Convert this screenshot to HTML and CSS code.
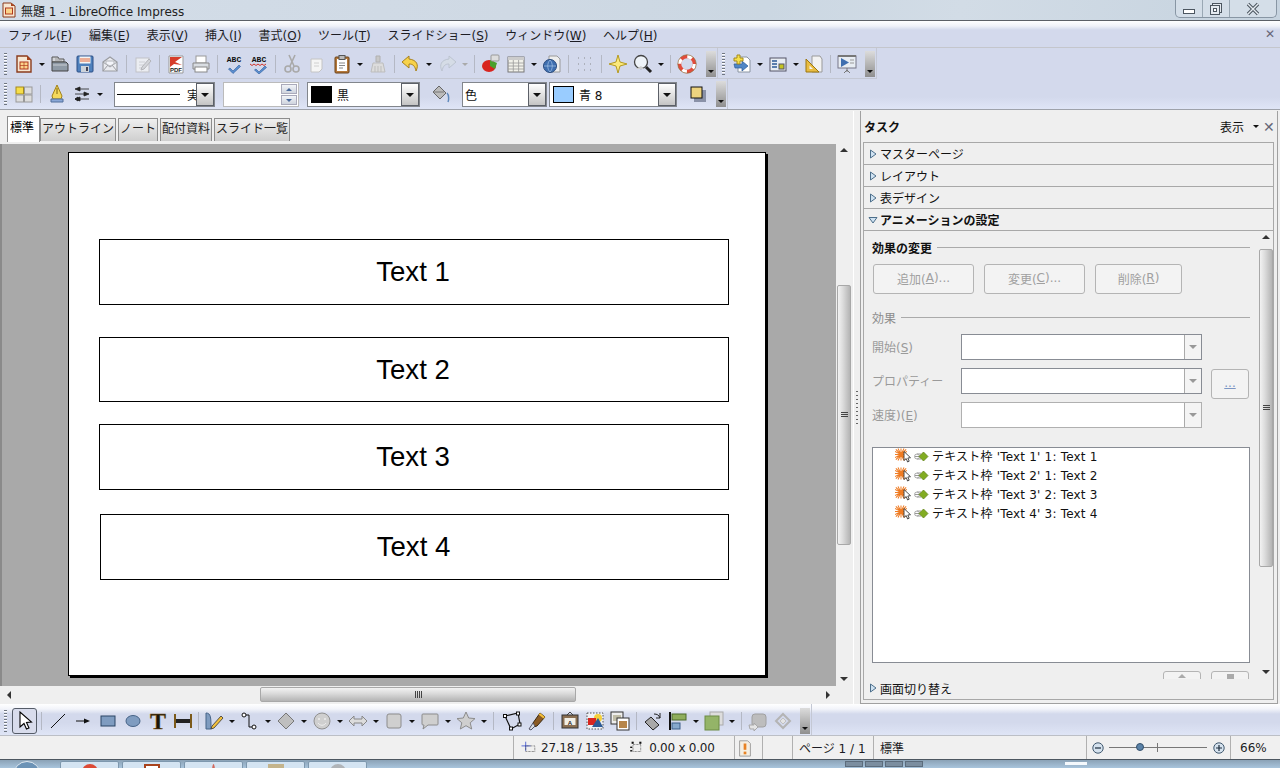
FILE: index.html
```html
<!DOCTYPE html>
<html lang="ja">
<head>
  <meta charset="UTF-8">
  <title>無題 1 - LibreOffice Impress</title>
  <link rel="stylesheet" href="styles.css">
</head>
<body>
  <svg class="defs" width="0" height="0">
    <symbol id="i-doc" viewBox="0 0 20 20"><path d="M3 2h10l4 4v12H3z" fill="#f6e7d2" stroke="#8a3b1c" stroke-width="1.4"/><path d="M13 2v4h4z" fill="#a8431c"/><rect x="6" y="8" width="8" height="7" fill="#fbd38a" stroke="#b0391c"/><path d="M6 11.500h8M10 8v7" stroke="#b0391c" stroke-width=".7"/></symbol>
    <symbol id="i-open" viewBox="0 0 20 20"><path d="M2 3h6l1 2h5v3H2z" fill="#d4d6da" stroke="#555"/><path d="M5 5h7M5 7h7" stroke="#999"/><path d="M2 8h14l2 2v7H2z" fill="#8f9aa6" stroke="#444"/><path d="M3 11h14" stroke="#c8ccd2"/></symbol>
    <symbol id="i-save" viewBox="0 0 20 20"><rect x="2" y="2" width="16" height="16" rx="1" fill="#4f81bd" stroke="#2c4f86"/><rect x="4.500" y="2.500" width="11" height="7" fill="#f5f5f5"/><path d="M5 5h10M5 7h10" stroke="#e2693a"/><rect x="6" y="12" width="8" height="6" fill="#cdd3da"/><rect x="11" y="13" width="2" height="4" fill="#445"/></symbol>
    <symbol id="i-mail" viewBox="0 0 20 20"><path d="M3 8l7-5 7 5v9H3z" fill="#f2f2f2" stroke="#888" stroke-width="1.200"/><path d="M3 8l7 5 7-5M3 17l5-6M17 17l-5-6" fill="none" stroke="#888"/><path d="M6 7h8v3l-4 2-4-2z" fill="#fff" stroke="#aaa"/></symbol>
    <symbol id="i-edit" viewBox="0 0 20 20"><rect x="3" y="4" width="13" height="14" fill="#f4f4f4" stroke="#bbb"/><path d="M6 8h6M6 11h5M6 14h4" stroke="#ccc"/><path d="M9 13l7-8 2 2-7 8-3 1z" fill="#d4d4d4" stroke="#aaa"/></symbol>
    <symbol id="i-print" viewBox="0 0 20 20"><rect x="5" y="2" width="10" height="7" fill="#fff" stroke="#999"/><path d="M2 9h16v6H2z" fill="#d9dde2" stroke="#888"/><rect x="4" y="13" width="12" height="5" fill="#fff" stroke="#888"/></symbol>
    <symbol id="i-cut" viewBox="0 0 20 20"><path d="M7 1l5 11M13 1L8 12" stroke="#a9a9a9" stroke-width="1.600"/><circle cx="6" cy="15" r="3" fill="none" stroke="#a9a9a9" stroke-width="1.600"/><circle cx="14" cy="15" r="3" fill="none" stroke="#a9a9a9" stroke-width="1.600"/></symbol>
    <symbol id="i-copy" viewBox="0 0 20 20"><path d="M4 5h11v10l-3 3H4z" fill="#f5f5f5" stroke="#c4c4c4"/><path d="M7 9h5M7 12h5" stroke="#d0d0d0"/></symbol>
    <symbol id="i-paste" viewBox="0 0 20 20"><rect x="3" y="3" width="14" height="16" rx="1" fill="#b5793a" stroke="#6b4218"/><rect x="5" y="5" width="10" height="12" fill="#fff"/><rect x="7" y="1.500" width="6" height="4" fill="#bbb" stroke="#555"/><path d="M7 9h6M7 11.500h6M7 14h4" stroke="#888"/></symbol>
    <symbol id="i-clone" viewBox="0 0 20 20"><path d="M8 2h4v6h-4z" fill="#c8c8c8" stroke="#b0b0b0"/><path d="M5 9h10l2 9H3z" fill="#dcdcdc" stroke="#bdbdbd"/><path d="M7 12v6M10 12v6M13 12v6" stroke="#bdbdbd"/></symbol>
    <symbol id="i-undo" viewBox="0 0 20 20"><path d="M8 2L1 8l7 6v-4c4 0 6 2 7 7 3-6 1-11-7-12z" fill="#f7d24a" stroke="#a8811c"/></symbol>
    <symbol id="i-redo" viewBox="0 0 20 20"><path d="M12 2l7 6-7 6v-4c-4 0-6 2-7 7-3-6-1-11 7-12z" fill="#d5dce6" stroke="#bcc4d0"/></symbol>
    <symbol id="i-chart" viewBox="0 0 20 20"><ellipse cx="8" cy="12" rx="7" ry="6" fill="#d8251f"/><path d="M9 6l7 3-2 6-5-3z" fill="#4aa02c"/><rect x="10" y="1" width="8" height="6" rx="1" fill="#ddd" stroke="#999"/></symbol>
    <symbol id="i-table" viewBox="0 0 20 20"><rect x="2" y="3" width="16" height="15" fill="#f1f1ea" stroke="#777"/><rect x="2" y="3" width="16" height="3" fill="#ccc"/><path d="M2 9h16M2 12h16M2 15h16M7.300 6v12M12.600 6v12" stroke="#999" stroke-width=".8"/></symbol>
    <symbol id="i-link" viewBox="0 0 20 20"><path d="M7 2h8l3 3v13H7z" fill="#eee" stroke="#999"/><circle cx="8" cy="12" r="6.500" fill="#3f6fb0" stroke="#28497c"/><path d="M2 12h12M8 6c-3 3-3 9 0 12M8 6c3 3 3 9 0 12" stroke="#a8c6e8" fill="none" stroke-width=".7"/></symbol>
    <symbol id="i-grid" viewBox="0 0 20 20"><path d="M3 4h.8M9 4h.8M15 4h.8M3 10h.8M9 10h.8M15 10h.8M3 16h.8M9 16h.8M15 16h.8" stroke="#777" stroke-width="1.200"/></symbol>
    <symbol id="i-star" viewBox="0 0 20 20"><path d="M10 1l2 7 7 2-7 2-2 7-2-7-7-2 7-2z" fill="#fbe97b" stroke="#b59a20"/></symbol>
    <symbol id="i-find" viewBox="0 0 20 20"><circle cx="8" cy="8" r="6.500" fill="#eef3f8" stroke="#444" stroke-width="1.300"/><path d="M3 15h8l-3-3z" fill="#ccc"/><path d="M13 13l5 5" stroke="#222" stroke-width="3"/></symbol>
    <symbol id="i-help" viewBox="0 0 20 20"><circle cx="10" cy="10" r="7.500" fill="none" stroke="#e24b3b" stroke-width="3.500"/><circle cx="10" cy="10" r="7.500" fill="none" stroke="#fff" stroke-width="3.500" stroke-dasharray="5 6.800"/><circle cx="10" cy="10" r="9.200" fill="none" stroke="#8c6b3a" stroke-width=".7"/></symbol>
    <symbol id="i-slide" viewBox="0 0 20 20"><path d="M6 3h9l3 3v12H6z" fill="#fff" stroke="#8a94a0"/><path d="M2 13h8v-3l6 5-6 5v-3H3z" fill="#4f86c6" stroke="#2c5a96" stroke-width=".7" transform="translate(0 -3)"/><path d="M5 1h3v3h3v3H8v3H5V7H2V4h3z" fill="#f6e04a" stroke="#a48a1c"/></symbol>
    <symbol id="i-layout" viewBox="0 0 20 20"><rect x="2" y="4" width="16" height="13" fill="#e8edf3" stroke="#556"/><path d="M4 7h5M4 10h5M4 13h5" stroke="#2c5a96" stroke-width="1.400"/><rect x="11" y="10" width="5" height="5" fill="#c4c420" stroke="#556"/></symbol>
    <symbol id="i-tri" viewBox="0 0 20 20"><path d="M8 2h8l2 3v13H8z" fill="#f2f2f2" stroke="#999"/><path d="M2 18V5l13 13z" fill="#e8bc42" stroke="#9b7710"/><path d="M5.500 15v-3.500l3.500 3.500z" fill="#f2f2f2"/></symbol>
    <symbol id="i-show" viewBox="0 0 20 20"><rect x="1" y="2" width="18" height="12" fill="#e8edf3" stroke="#778"/><path d="M1 2h18" stroke="#777" stroke-width="2"/><path d="M4 4l8 4.500-8 4.500z" fill="#3f6fb0"/><path d="M13 6h4M13 9h4" stroke="#999"/><path d="M10 14v4M7 19l3-3 3 3" stroke="#777" fill="none"/></symbol>
    <symbol id="i-quad" viewBox="0 0 20 20"><rect x="2" y="3" width="7.500" height="7" fill="#f6de4a" stroke="#a48a1c"/><rect x="10.500" y="3" width="7.500" height="7" fill="#ddd" stroke="#999"/><rect x="2" y="11" width="7.500" height="7" fill="#ddd" stroke="#999"/><rect x="10.500" y="11" width="7.500" height="7" fill="#ddd" stroke="#999"/></symbol>
    <symbol id="i-pen" viewBox="0 0 20 20"><path d="M10 1l5 11-1 3H6l-1-3z" fill="#f4d95c" stroke="#a08016"/><path d="M10 4v6" stroke="#7c6410"/><path d="M4 15h12v3H4z" fill="#8aa8d8" stroke="#52709c"/></symbol>
    <symbol id="i-arrows" viewBox="0 0 20 20"><path d="M17 5H7M8 3L3 5l5 2zM3 10h10M12 8l5 2-5 2zM17 15H7M8 13l-5 2 5 2zM6 13l-3 2 3 2z" stroke="#222" fill="#222" stroke-width=".8"/></symbol>
    <symbol id="i-fill" viewBox="0 0 20 20"><path d="M8 2l7 7-6 6-7-7z" fill="#bbb" stroke="#666"/><path d="M2 8h11" stroke="#777"/><path d="M16 9c2 2 2 7 1 9" fill="none" stroke="#5e88bb" stroke-width="1.500"/></symbol>
    <symbol id="i-shadow" viewBox="0 0 20 20"><rect x="6" y="6" width="12" height="12" fill="#8a92a8"/><rect x="3" y="3" width="11" height="11" fill="#edd37f" stroke="#111"/></symbol>
    <symbol id="i-select" viewBox="0 0 20 20"><path d="M5 1v15l4-3.500 2.500 5.500 2.500-1-2.500-5.500 5-.5z" fill="#fff" stroke="#000" stroke-width="1.100"/></symbol>
    <symbol id="i-line" viewBox="0 0 20 20"><path d="M3 17L17 3" stroke="#111"/></symbol>
    <symbol id="i-arrow" viewBox="0 0 20 20"><path d="M3 10h9" stroke="#111"/><path d="M11 7.500l6 2.500-6 2.500z" fill="#111"/></symbol>
    <symbol id="i-rect" viewBox="0 0 20 20"><rect x="3" y="5" width="14" height="10" fill="#7f9cc0" stroke="#2b4464"/></symbol>
    <symbol id="i-ellipse" viewBox="0 0 20 20"><ellipse cx="10" cy="10" rx="7" ry="5.500" fill="#7f9cc0" stroke="#476488"/></symbol>
    <symbol id="i-htext" viewBox="0 0 20 20"><path d="M2 3v14M18 3v14" stroke="#7c5a1a" stroke-width="2"/><path d="M3 8h14v4H3z" fill="#222"/></symbol>
    <symbol id="i-curve" viewBox="0 0 20 20"><path d="M2 2c5 0 5 5 5 16H2z" fill="#7f9cc0" stroke="#476488"/><path d="M8 15l9-10 2 2-9 10-3 1z" fill="#f2c03c" stroke="#333" stroke-width=".8"/></symbol>
    <symbol id="i-conn" viewBox="0 0 20 20"><path d="M6 4h3v12h3" fill="none" stroke="#111"/><circle cx="4" cy="4" r="2" fill="#fff" stroke="#111"/><circle cx="14" cy="16" r="2" fill="#fff" stroke="#111"/></symbol>
    <symbol id="i-diamond" viewBox="0 0 20 20"><path d="M10 2l8 8-8 8-8-8z" fill="#bfbfbf" stroke="#777"/></symbol>
    <symbol id="i-smile" viewBox="0 0 20 20"><circle cx="10" cy="10" r="8" fill="#cfcfcf" stroke="#909090"/><circle cx="7" cy="8" r="1" fill="#eee"/><circle cx="13" cy="8" r="1" fill="#eee"/><path d="M6 12c2 3 6 3 8 0" fill="none" stroke="#eee"/></symbol>
    <symbol id="i-dbl" viewBox="0 0 20 20"><path d="M1 10l5-5v3h8V5l5 5-5 5v-3H6v3z" fill="#dcdcdc" stroke="#888"/></symbol>
    <symbol id="i-flow" viewBox="0 0 20 20"><rect x="3" y="3" width="14" height="14" rx="2" fill="#cfcfcf" stroke="#8c8c8c"/></symbol>
    <symbol id="i-call" viewBox="0 0 20 20"><path d="M3 3h14a1 1 0 0 1 1 1v9a1 1 0 0 1-1 1H8l-5 4 1-4H3a1 1 0 0 1-1-1V4a1 1 0 0 1 1-1z" fill="#cfcfcf" stroke="#8c8c8c"/></symbol>
    <symbol id="i-pstar" viewBox="0 0 20 20"><path d="M10 1l2.700 6 6.300.6-4.800 4.200 1.500 6.200-5.700-3.300L4.300 18l1.500-6.200L1 7.600 7.300 7z" fill="#cfcfcf" stroke="#8c8c8c"/></symbol>
    <symbol id="i-points" viewBox="0 0 20 20"><path d="M3 5l13-3 2 11-9 5z" fill="none" stroke="#111" stroke-width="1.200"/><g fill="#fff" stroke="#111"><rect x="1.500" y="3.500" width="3" height="3"/><rect x="14.500" y="1" width="3" height="3"/><rect x="16" y="12" width="3" height="3"/><rect x="7.500" y="16" width="3" height="3"/></g></symbol>
    <symbol id="i-glue" viewBox="0 0 20 20"><path d="M13 2l5 4-8 9-4 1 0-4z" fill="#8a5a24" stroke="#3c2a10"/><path d="M6 12l2 3-4 4-2-1z" fill="#d8dde4" stroke="#556"/><path d="M13 2l5 4-1.500 1.500-5-4z" fill="#f4c03c"/></symbol>
    <symbol id="i-image" viewBox="0 0 20 20"><rect x="2" y="2" width="16" height="16" fill="#eef0f4" stroke="#555" stroke-dasharray="1.500 1.500"/><circle cx="13" cy="7" r="4" fill="#f4d03c"/><rect x="3" y="7" width="8" height="7" fill="#d8251f"/><path d="M7 16l6-9 5 9z" fill="#2c5a96"/></symbol>
    <symbol id="i-arrange" viewBox="0 0 20 20"><rect x="1" y="1" width="12" height="12" fill="#eee" stroke="#333"/><rect x="3" y="4" width="8" height="6" fill="#c0bda8"/><rect x="7" y="7" width="12" height="12" fill="#fff" stroke="#333"/><rect x="9" y="10" width="8" height="7" fill="#b7864a"/></symbol>
    <symbol id="i-rotate" viewBox="0 0 20 20"><path d="M8 6l8 8-6 5-8-8z" fill="#a8a8a8" stroke="#222"/><path d="M11 3c3 0 5 1 6 4M17 2v5h-4" fill="none" stroke="#222"/></symbol>
    <symbol id="i-align" viewBox="0 0 20 20"><path d="M2 1v18" stroke="#111" stroke-width="2"/><rect x="4" y="3" width="14" height="6" fill="#8fae5c" stroke="#4c6a2a"/><rect x="4" y="12" width="8" height="6" fill="#86a8cc" stroke="#3c5e88"/></symbol>
    <symbol id="i-order" viewBox="0 0 20 20"><rect x="6" y="1" width="13" height="13" fill="#ddd" stroke="#aaa"/><rect x="1" y="5" width="14" height="14" fill="#94b468" stroke="#6c8c44"/></symbol>
    <symbol id="i-ext" viewBox="0 0 20 20"><rect x="4" y="3" width="14" height="13" rx="3" fill="#bdbdbd" stroke="#a0a0a0"/><path d="M1 14h5v-2l4 4-4 4v-2H2z" fill="#e4e4e4" stroke="#a8a8a8"/></symbol>
    <symbol id="i-grp" viewBox="0 0 20 20"><path d="M10 3l7 7-7 7-7-7z" fill="none" stroke="#b4b4b4" stroke-width="2"/><path d="M10 7l3 3-3 3-3-3z" fill="#e4e4e4" stroke="#c0c0c0"/></symbol>
    <symbol id="i-pos" viewBox="0 0 20 20"><path d="M6 1v13M0 7h13" stroke="#1a34c8"/><rect x="6" y="7" width="13" height="8" fill="none" stroke="#333" stroke-dasharray="1 1"/></symbol>
    <symbol id="i-size" viewBox="0 0 20 20"><rect x="5" y="5" width="11" height="10" fill="none" stroke="#333" stroke-dasharray="1 1"/><g fill="#111"><rect x="3" y="1" width="3" height="3"/><rect x="14" y="1" width="3" height="3"/><rect x="1" y="8" width="3" height="2"/><rect x="1" y="13" width="3" height="2"/></g></symbol>
    <symbol id="i-mod" viewBox="0 0 20 20"><path d="M4 2h9l3 3v14H4z" fill="#f5efe2" stroke="#999"/><rect x="8.500" y="5" width="3" height="7" fill="#e88324"/><rect x="8.500" y="14" width="3" height="3" fill="#e88324"/></symbol>
    <symbol id="i-burst" viewBox="0 0 14 14"><g stroke="#ef7b22" stroke-width="1.200"><path d="M1 1l12 12M13 1L1 13M7 0v14M0 7h14M3.500 0l7 14M10.500 0l-7 14M0 3.500l14 7M0 10.500l14-7"/></g></symbol>
    <symbol id="i-cursor" viewBox="0 0 8 12"><path d="M1 .5v9l2.200-2 1.400 3.500 1.600-.8-1.400-3.200 2.700-.3z" fill="#fff" stroke="#222" stroke-width=".8"/></symbol>
    <symbol id="i-effect" viewBox="0 0 15 11"><path d="M1 5.500h6M3 3h4M3 8h4" stroke="#999"/><circle cx="3" cy="5.500" r="2.500" fill="none" stroke="#aaa"/><path d="M9.500 1l4.500 4.500L9.500 10 5 5.500z" fill="#82ac22" stroke="#5c7c14" stroke-width=".7"/></symbol>
    <symbol id="i-deck-open" viewBox="0 0 10 10"><path d="M1 2.500h8L5 8z" fill="#cfe2f2" stroke="#4c6e8a"/></symbol>
    <symbol id="i-deck-closed" viewBox="0 0 10 10"><path d="M2.500 1v8L8 5z" fill="#cfe2f2" stroke="#4c6e8a"/></symbol>
    <symbol id="i-minus" viewBox="0 0 12 12"><circle cx="6" cy="6" r="5.200" fill="#d5e2ee" stroke="#40586e"/><path d="M3 6h6" stroke="#1c2c3c" stroke-width="1.200"/></symbol>
    <symbol id="i-plus" viewBox="0 0 12 12"><circle cx="6" cy="6" r="5.200" fill="#d5e2ee" stroke="#40586e"/><path d="M3 6h6M6 3v6" stroke="#1c2c3c" stroke-width="1.200"/></symbol>
    <symbol id="i-app" viewBox="0 0 14 16"><path d="M1 1h8l4 3v11H1z" fill="#f6e7d2" stroke="#8a3b1c"/><path d="M9 1v3h4z" fill="#a8431c"/><rect x="3.500" y="6" width="7" height="6" fill="#fbd38a" stroke="#b0391c"/></symbol>
    <symbol id="w-min" viewBox="0 0 14 14"><rect x="1.500" y="7.500" width="11" height="4" fill="#fff" stroke="#4c5660"/></symbol>
    <symbol id="w-max" viewBox="0 0 14 14"><rect x="3.500" y="1.500" width="9" height="9" fill="#e4eaf0" stroke="#4c5660"/><rect x="1.500" y="3.500" width="9" height="9" fill="#e4eaf0" stroke="#4c5660"/><rect x="4.500" y="6.500" width="3" height="3" fill="#fff" stroke="#4c5660"/></symbol>
    <symbol id="w-close" viewBox="0 0 14 14"><path d="M2 2l10 10M12 2L2 12" stroke="#4c5660" stroke-width="3.400"/><path d="M2 2l10 10M12 2L2 12" stroke="#e6ecf2" stroke-width="1.400"/></symbol>
  </svg>

  <div class="titlebar">
    <svg class="app-icon"><use href="#i-app"/></svg>
    <span class="title-text">無題 1 - LibreOffice Impress</span>
    <div class="winbtns">
      <div class="winbtn"><svg><use href="#w-min"/></svg></div>
      <div class="winbtn"><svg><use href="#w-max"/></svg></div>
      <div class="winbtn winbtn-close"><svg><use href="#w-close"/></svg></div>
    </div>
  </div>

  <div class="menubar">
    <span>ファイル(<u>F</u>)</span>
    <span>編集(<u>E</u>)</span>
    <span>表示(<u>V</u>)</span>
    <span>挿入(<u>I</u>)</span>
    <span>書式(<u>O</u>)</span>
    <span>ツール(<u>T</u>)</span>
    <span>スライドショー(<u>S</u>)</span>
    <span>ウィンドウ(<u>W</u>)</span>
    <span>ヘルプ(<u>H</u>)</span>
    <span class="menu-close">✕</span>
  </div>

  <div class="toolrow">
    <div class="toolbar tb-standard">
      <i class="grip"></i>
      <b class="s"><svg><use href="#i-doc"/></svg></b><i class="a"></i>
      <b class="s"><svg><use href="#i-open"/></svg></b>
      <b class="s"><svg><use href="#i-save"/></svg></b>
      <b class="s off"><svg><use href="#i-mail"/></svg></b>
      <i class="sep"></i>
      <b class="s off"><svg><use href="#i-edit"/></svg></b>
      <i class="sep"></i>
      <b class="s"><svg viewBox="0 0 20 20"><path d="M3 2h14v17H3z" fill="#fff" stroke="#999"/><path d="M4 3h12L9 8l7 3-8-1-4 3z" fill="#d63c2a"/><text x="10" y="18" class="svg-sm" text-anchor="middle">PDF</text></svg></b>
      <b class="s"><svg><use href="#i-print"/></svg></b>
      <i class="sep"></i>
      <b class="s"><svg viewBox="0 0 20 20"><text x="10" y="7.500" class="svg-abc" text-anchor="middle">ABC</text><path d="M6 14l3 3 6-6 1.500 1.500L9 19.500 4.500 15z" fill="#5b8fd0" stroke="#2a5a9c" stroke-width=".6"/></svg></b>
      <b class="s"><svg viewBox="0 0 20 20"><text x="10" y="7.500" class="svg-abc" text-anchor="middle">ABC</text><path d="M1 10l2 1.500 2-1.500 2 1.500 2-1.500 2 1.500 2-1.500 2 1.500 2-1.500" fill="none" stroke="#d2342a"/><path d="M7 15l3 3 6-6 1.500 1.500L10 20l-4.500-4z" fill="#5b8fd0" stroke="#2a5a9c" stroke-width=".6"/></svg></b>
      <i class="sep"></i>
      <b class="s"><svg><use href="#i-cut"/></svg></b>
      <b class="s"><svg><use href="#i-copy"/></svg></b>
      <b class="s"><svg><use href="#i-paste"/></svg></b><i class="a"></i>
      <b class="s"><svg><use href="#i-clone"/></svg></b>
      <i class="sep"></i>
      <b class="s"><svg><use href="#i-undo"/></svg></b><i class="a"></i>
      <b class="s"><svg><use href="#i-redo"/></svg></b><i class="a dim"></i>
      <i class="sep"></i>
      <b class="s"><svg><use href="#i-chart"/></svg></b>
      <b class="s"><svg><use href="#i-table"/></svg></b><i class="a"></i>
      <b class="s"><svg><use href="#i-link"/></svg></b>
      <i class="sep"></i>
      <b class="s"><svg><use href="#i-grid"/></svg></b>
      <i class="sep"></i>
      <b class="s"><svg><use href="#i-star"/></svg></b>
      <b class="s"><svg><use href="#i-find"/></svg></b><i class="a"></i>
      <i class="sep"></i>
      <b class="s"><svg><use href="#i-help"/></svg></b>
      <i class="more"></i>
    </div>
    <div class="toolbar tb-present">
      <i class="grip"></i>
      <b class="s"><svg><use href="#i-slide"/></svg></b><i class="a"></i>
      <b class="s"><svg><use href="#i-layout"/></svg></b><i class="a"></i>
      <b class="s"><svg><use href="#i-tri"/></svg></b>
      <i class="sep"></i>
      <b class="s"><svg><use href="#i-show"/></svg></b>
      <i class="more"></i>
    </div>
  </div>

  <div class="toolrow toolrow-2">
    <div class="toolbar tb-line">
      <i class="grip"></i>
      <b class="s"><svg><use href="#i-quad"/></svg></b>
      <i class="sep"></i>
      <b class="s"><svg><use href="#i-pen"/></svg></b>
      <b class="s"><svg><use href="#i-arrows"/></svg></b><i class="a"></i>
      <div class="combo combo-line"><span class="line-sample"></span><span class="combo-text">実</span><span class="drop"></span></div>
      <div class="spin"><span class="spin-btn up"></span><span class="spin-btn down"></span></div>
      <div class="combo combo-color"><span class="swatch swatch-black"></span><span class="combo-text">黒</span><span class="drop"></span></div>
      <b class="s s-gap"><svg><use href="#i-fill"/></svg></b>
      <div class="combo combo-fill"><span class="combo-text">色</span><span class="drop"></span></div>
      <div class="combo combo-blue"><span class="swatch swatch-blue"></span><span class="combo-text">青 8</span><span class="drop"></span></div>
      <b class="s s-gap"><svg><use href="#i-shadow"/></svg></b>
      <i class="more"></i>
    </div>
  </div>

  <div class="main">
    <div class="editor">
      <div class="tabs">
        <span class="tab active">標準</span>
        <span class="tab">アウトライン</span>
        <span class="tab">ノート</span>
        <span class="tab">配付資料</span>
        <span class="tab">スライド一覧</span>
      </div>
      <div class="work-row">
        <div class="workspace">
          <div class="slide">
            <div class="textbox">Text 1</div>
            <div class="textbox">Text 2</div>
            <div class="textbox">Text 3</div>
            <div class="textbox">Text 4</div>
          </div>
        </div>
        <div class="vscroll vs-main">
          <i class="up"></i>
          <div class="thumb"><span class="lines"></span></div>
          <i class="down"></i>
        </div>
      </div>
      <div class="hscroll">
        <i class="left"></i>
        <div class="hthumb"><span class="hlines"></span></div>
        <i class="right"></i>
      </div>
    </div>

    <div class="splitter"><span class="split-grip"></span></div>

    <div class="panel">
      <div class="panel-head">
        <strong>タスク</strong>
        <span class="panel-view">表示</span>
        <i class="a"></i>
        <span class="panel-close">✕</span>
      </div>
      <div class="deck"><svg><use href="#i-deck-closed"/></svg>マスターページ</div>
      <div class="deck"><svg><use href="#i-deck-closed"/></svg>レイアウト</div>
      <div class="deck"><svg><use href="#i-deck-closed"/></svg>表デザイン</div>
      <div class="deck deck-open"><svg><use href="#i-deck-open"/></svg>アニメーションの設定</div>

      <div class="anim">
        <div class="anim-body">
          <div class="group-head strong"><span>効果の変更</span></div>
          <div class="btn-row">
            <span class="btn btn-add">追加(<u>A</u>)...</span>
            <span class="btn btn-add">変更(<u>C</u>)...</span>
            <span class="btn btn-del">削除(<u>R</u>)</span>
          </div>
          <div class="group-head"><span>効果</span></div>
          <div class="field first"><label>開始(<u>S</u>)</label><div class="fcombo"><span class="fdrop"></span></div></div>
          <div class="field"><label>プロパティー</label><div class="fcombo"><span class="fdrop"></span></div><span class="btn btn-dots">...</span></div>
          <div class="field"><label>速度)(<u>E</u>)</label><div class="fcombo light"><span class="fdrop"></span></div></div>
          <ul class="effects">
            <li><svg class="e1"><use href="#i-burst"/></svg><svg class="e2"><use href="#i-cursor"/></svg><svg class="e3"><use href="#i-effect"/></svg>テキスト枠 'Text 1' 1: Text 1</li>
            <li><svg class="e1"><use href="#i-burst"/></svg><svg class="e2"><use href="#i-cursor"/></svg><svg class="e3"><use href="#i-effect"/></svg>テキスト枠 'Text 2' 1: Text 2</li>
            <li><svg class="e1"><use href="#i-burst"/></svg><svg class="e2"><use href="#i-cursor"/></svg><svg class="e3"><use href="#i-effect"/></svg>テキスト枠 'Text 3' 2: Text 3</li>
            <li><svg class="e1"><use href="#i-burst"/></svg><svg class="e2"><use href="#i-cursor"/></svg><svg class="e3"><use href="#i-effect"/></svg>テキスト枠 'Text 4' 3: Text 4</li>
          </ul>
          <div class="move-row">
            <span class="btn btn-move"><i class="mv-up"></i></span>
            <span class="btn btn-move"><i class="mv-down"></i></span>
          </div>
        </div>
        <div class="vscroll vs-panel">
          <i class="up"></i>
          <div class="thumb"><span class="lines"></span></div>
          <i class="down"></i>
        </div>
      </div>
      <div class="deck deck-last"><svg><use href="#i-deck-closed"/></svg>画面切り替え</div>
    </div>
  </div>

  <div class="toolrow toolrow-draw">
    <div class="toolbar tb-draw">
      <i class="grip"></i>
      <b class="s-select"><svg><use href="#i-select"/></svg></b>
      <i class="sep"></i>
      <b class="s"><svg><use href="#i-line"/></svg></b>
      <b class="s"><svg><use href="#i-arrow"/></svg></b>
      <b class="s"><svg><use href="#i-rect"/></svg></b>
      <b class="s"><svg><use href="#i-ellipse"/></svg></b>
      <b class="s"><svg viewBox="0 0 20 20"><text x="10" y="17.500" class="svg-t" text-anchor="middle">T</text></svg></b>
      <b class="s"><svg><use href="#i-htext"/></svg></b>
      <i class="sep sep-n"></i>
      <b class="s"><svg><use href="#i-curve"/></svg></b><i class="a"></i>
      <b class="s"><svg><use href="#i-conn"/></svg></b><i class="a"></i>
      <b class="s"><svg><use href="#i-diamond"/></svg></b><i class="a"></i>
      <b class="s"><svg><use href="#i-smile"/></svg></b><i class="a"></i>
      <b class="s"><svg><use href="#i-dbl"/></svg></b><i class="a"></i>
      <b class="s"><svg><use href="#i-flow"/></svg></b><i class="a"></i>
      <b class="s"><svg><use href="#i-call"/></svg></b><i class="a"></i>
      <b class="s"><svg><use href="#i-pstar"/></svg></b><i class="a"></i>
      <i class="sep sep-w"></i>
      <b class="s"><svg><use href="#i-points"/></svg></b>
      <b class="s"><svg><use href="#i-glue"/></svg></b>
      <i class="sep"></i>
      <b class="s"><svg viewBox="0 0 20 20"><path d="M7 4l3-3 3 3" fill="none" stroke="#444"/><rect x="2" y="4" width="16" height="13" fill="#8a6f52" stroke="#333"/><rect x="4.500" y="7" width="11" height="7" fill="#f2efe6"/><text x="10" y="13.500" class="svg-sm" text-anchor="middle">A</text></svg></b>
      <b class="s"><svg><use href="#i-image"/></svg></b>
      <b class="s"><svg><use href="#i-arrange"/></svg></b>
      <i class="sep"></i>
      <b class="s"><svg><use href="#i-rotate"/></svg></b>
      <b class="s"><svg><use href="#i-align"/></svg></b><i class="a"></i>
      <b class="s"><svg><use href="#i-order"/></svg></b><i class="a"></i>
      <i class="sep"></i>
      <b class="s"><svg><use href="#i-ext"/></svg></b>
      <b class="s"><svg><use href="#i-grp"/></svg></b>
      <i class="more"></i>
    </div>
  </div>

  <div class="statusbar">
    <div class="st st-blank"></div>
    <div class="st st-pos"><svg><use href="#i-pos"/></svg><span>27.18 / 13.35</span><svg class="st-size"><use href="#i-size"/></svg><span>0.00 x 0.00</span></div>
    <div class="st st-mod"><svg><use href="#i-mod"/></svg></div>
    <div class="st st-empty"></div>
    <div class="st st-page">ページ 1 / 1</div>
    <div class="st st-style">標準</div>
    <div class="st st-zoom">
      <svg class="z-btn"><use href="#i-minus"/></svg>
      <div class="z-track"><span class="z-tick"></span><span class="z-knob"></span></div>
      <svg class="z-btn"><use href="#i-plus"/></svg>
    </div>
    <div class="st st-pct">66%</div>
  </div>

  <div class="taskbar">
    <span class="orb"></span>
    <div class="task-btns">
      <span class="task"><i class="t-red"></i></span>
      <span class="task"><i class="t-brown"></i></span>
      <span class="task"><i class="t-tick"></i></span>
      <span class="task"><i class="t-tan"></i></span>
      <span class="task"><i class="t-grey"></i></span>
    </div>
    <div class="tray"><span></span><span></span><span></span><span></span></div>
    <span class="clock"></span>
  </div>
</body>
</html>
```

FILE: styles.css
```css
* { box-sizing: border-box; }
html, body { margin: 0; height: 100%; }
body {
  width: 1280px; height: 768px; overflow: hidden;
  display: flex; flex-direction: column;
  font-family: "DejaVu Sans", "Noto Sans CJK JP", sans-serif;
  font-size: 12px; color: #111; background: #efefef;
}
.defs { position: absolute; }
i, b { display: block; font-style: normal; }
u { text-underline-offset: 1px; }

.svg-sm { font: bold 6px "Liberation Sans", sans-serif; fill: #222; }
.svg-abc { font: bold 8px "Liberation Mono", monospace; fill: #111; }
.svg-t { font: bold 24px "Liberation Serif", serif; fill: #1c1408; stroke: #8a6420; stroke-width: .4px; }

/* title bar */
.titlebar {
  height: 21px; flex: none; display: flex; align-items: center;
  background: linear-gradient(100deg, #d3dde8 0%, #cfd9e4 40%, #cbd7e2 60%, #d2dce6 75%, #c6d3df 100%);
  border-bottom: 1px solid #5c6066;
  padding-left: 2px;
}
.app-icon { width: 14px; height: 16px; }
.title-text { margin-left: 5px; font-size: 12px; color: #222; }
.winbtns {
  margin-left: auto; margin-right: 3px; align-self: flex-start;
  display: flex; height: 18px; width: 102px;
  border: 1px solid #8896a4; border-top: none;
  border-radius: 0 0 5px 5px;
  background: #d4dee8;
}
.winbtn {
  width: 27px; display: flex; align-items: center; justify-content: center;
  border-right: 1px solid #9aa8b4; flex: none;
}
.winbtn svg { width: 14px; height: 14px; }
.winbtn-close { flex: 1; border-right: none; }

/* menu */
.menubar {
  height: 27px; flex: none; display: flex; align-items: center; gap: 16.700px;
  padding-left: 8px;
  background: linear-gradient(#fff 0, #f0f2f8 5px, #d3d9ec 9px, #d3d9ec 100%);
  border-bottom: 1px solid #c4c6cc;
  color: #1c1c24;
}
.menu-close { margin-left: auto; margin-right: 5px; font: bold 12px "DejaVu Sans", sans-serif; color: #667; }

/* toolbars */
.toolrow {
  height: 31px; flex: none; display: flex;
  background: #d3d9ec;
}
.toolrow-2 {
  height: 31px;
  background: linear-gradient(#d3d9ec 60%, #dfe5f6);
  border-bottom: 1px solid #9ea2aa;
}
.toolbar {
  display: flex; align-items: center; height: 100%;
  padding-left: 4px;
  border-right: 1px solid #c4c8d4;
  position: relative;
}
.tb-standard { width: 718px; border-bottom: 1px solid #c4c8d4; padding-top: 1px; }
.tb-present { width: 159px; border-bottom: 1px solid #c4c8d4; padding-top: 1px; }
.tb-line { width: 728px; border-right: 1px solid #c4c8d4; }
.grip {
  width: 3px; height: 22px; margin-right: 4px; flex: none;
  background: repeating-linear-gradient(#6f7680 0 1px, #fff 1px 2px, transparent 2px 3px);
}
.s { width: 25px; height: 22px; flex: none; display: flex; align-items: center; justify-content: center; }
.s svg { width: 20px; height: 20px; }
.s.off { opacity: .75; }
.a {
  width: 11px; height: 22px; flex: none; position: relative;
}
.a::after {
  content: ""; position: absolute; left: 3px; top: 10px;
  border: 3px solid transparent; border-top-color: #111; border-bottom: 0;
}
.a.dim::after { border-top-color: #aaa; }
.sep { width: 8px; height: 22px; flex: none; position: relative; }
.sep::after { content: ""; position: absolute; left: 4px; top: 2px; bottom: 2px; width: 1px; background: #b4b8c4; }
.sep-n { width: 6px; }
.sep-n::after { left: 3px; }
.sep-w { width: 10px; }
.sep-w::after { left: 4px; }
.more {
  width: 10px; height: 26px; margin-left: auto; margin-right: 1px; flex: none; position: relative;
  background: linear-gradient(#dcdcdc, #8f8f8f);
}
.more::after {
  content: ""; position: absolute; left: 2px; bottom: 4px;
  border: 3px solid transparent; border-top-color: #111; border-bottom: 0;
}

/* combos */
.combo {
  height: 25px; flex: none; display: flex; align-items: center;
  background: #fff; border: 1px solid #82868c; margin-left: 8px;
  position: relative;
}
.combo-line { width: 101px; margin-left: 9px; }
.combo-color { width: 113px; }
.combo-fill { width: 85px; margin-left: 9px; }
.combo-blue { width: 128px; margin-left: 2px; }
.line-sample { width: 63px; height: 1px; background: #000; margin-left: 2px; flex: none; }
.combo-text { margin-left: 5px; white-space: nowrap; }
.combo-line .combo-text { margin-left: 7px; }
.combo-fill .combo-text { margin-left: 2px; }
.drop {
  position: absolute; right: 0; top: 0; bottom: 0; width: 18px;
  background: linear-gradient(#fff, #c4c4c4);
  border: 1px solid #5c6068;
}
.drop::after {
  content: ""; position: absolute; left: 4px; top: 9px;
  border: 4px solid transparent; border-top-color: #111; border-bottom: 0;
}
.swatch { width: 21px; height: 17px; margin-left: 3px; flex: none; border: 1px solid #000; }
.swatch-black { background: #000; }
.swatch-blue { background: #99ccff; }
.spin {
  width: 76px; height: 25px; flex: none; margin-left: 8px; padding: 1px 1px 1px 57px;
  background: #fff; border: 1px solid #bbb;
  display: flex; flex-direction: column; gap: 1px;
}
.spin-btn { flex: 1; position: relative; background: linear-gradient(#f2f4f8, #cfd4de); border: 1px solid #aab; }
.spin-btn::after { content: ""; position: absolute; left: 4px; top: 3px; border: 3px solid transparent; }
.spin-btn.up::after { border-bottom-color: #4a6a9c; border-top: 0; }
.spin-btn.down::after { border-top-color: #4a6a9c; border-bottom: 0; }
.s-gap { margin-left: 8px; }

/* main area */
.main { height: 594px; flex: none; display: flex; background: #efefef; border-top: 1px solid #efefef; }
.editor { width: 853px; flex: none; display: flex; flex-direction: column; }
.tabs {
  height: 33px; flex: none; display: flex; align-items: flex-end;
  padding: 0 0 3px 7px;
}
.tab {
  height: 23px; margin-right: 2px; padding: 0 1px; line-height: 21px;
  border: 1px solid #8d8d8d; border-bottom: none;
  background: linear-gradient(#efefef, #cfcfcf);
  color: #222;
}
.tab.active {
  height: 26px; margin-right: 0; padding: 0 2px;
  background: #fff; line-height: 22px; position: relative; top: 1px;
  color: #000; width: 33px;
}
.work-row { height: 542px; flex: none; display: flex; }
.workspace {
  width: 836px; flex: none; overflow: hidden;
  background: #a9a9a9; border-left: 2px solid #8a8a8a;
  padding: 8px 0 0 66px;
}
.slide {
  width: 698px; height: 524px; background: #fff;
  border: 1px solid #000; box-shadow: 2px 2px 0 #000;
  padding: 86px 0 0 30px;
}
.textbox {
  width: 630px; height: 66px; border: 1px solid #000; padding-right: 2px;
  display: flex; align-items: center; justify-content: center;
  font: 27.600px "Liberation Sans", sans-serif; color: #000;
  margin-bottom: 32px;
}
.textbox:nth-child(2) { height: 65px; margin-bottom: 22px; }
.textbox:nth-child(3) { margin-bottom: 24px; }
.textbox:nth-child(4) { width: 629px; margin-left: 1px; }

.vscroll { flex: none; position: relative; background: #efefef; }
.vscroll .up, .vscroll .down { position: absolute; left: 4px; border: 4px solid transparent; }
.vscroll .up { top: 4px; border-bottom-color: #333; border-top: 0; }
.vscroll .down { bottom: 5px; border-top-color: #333; border-bottom: 0; }
.thumb {
  position: absolute; left: 1px; right: 1px;
  background: linear-gradient(90deg, #f2f2f2, #dcdcdc 40%, #b4b4b4);
  border: 1px solid #a8a8a8; border-radius: 2px;
  display: flex; align-items: center; justify-content: center;
}
.vs-main { width: 16px; }
.vs-main .thumb { top: 141px; height: 260px; }
.lines { width: 7px; height: 6px; background: repeating-linear-gradient(#444 0 1px, transparent 1px 2px); }
.hscroll { height: 18px; flex: none; position: relative; background: #efefef; border-left: 2px solid #efefef; }
.hscroll .left, .hscroll .right { position: absolute; top: 5px; border: 4px solid transparent; }
.hscroll .left { left: 5px; border-right-color: #333; border-left: 0; }
.hscroll .right { left: 824px; border-left-color: #333; border-right: 0; }
.hthumb {
  position: absolute; left: 258px; width: 316px; top: 1px; height: 15px;
  background: linear-gradient(#f2f2f2, #dcdcdc 40%, #b4b4b4);
  border: 1px solid #a8a8a8; border-radius: 2px;
  display: flex; align-items: center; justify-content: center;
}
.hlines { width: 7px; height: 7px; background: repeating-linear-gradient(90deg, #444 0 1px, transparent 1px 2px); }

.splitter { width: 7px; flex: none; display: flex; align-items: center; justify-content: center; border-left: 1px solid #fff; }
.split-grip { width: 2px; height: 34px; margin-left: -1px; background: repeating-linear-gradient(#666 0 1px, transparent 1px 4px); }

/* task panel */
.panel {
  width: 418px; height: 593px; flex: none; display: flex; flex-direction: column;
  border: 1px solid #a0a0a0; border-top: none; padding: 0 3px 3px 2px;
}
.panel-head { height: 31px; flex: none; display: flex; align-items: center; padding: 0 0 0 1px; }
.panel-head strong { font-size: 12px; }
.panel-view { margin-left: auto; }
.panel-head .a { width: 16px; margin-left: 3px; height: 10px; }
.panel-head .a::after { left: 6px; top: 3px; border-width: 3px; border-bottom: 0; }
.panel-close { font: bold 14px "DejaVu Sans", sans-serif; color: #667; width: 12px; margin-right: -1px; }
.deck {
  height: 22px; flex: none; display: flex; align-items: center; gap: 2px;
  border: 1px solid #a8a8a8; border-top: none; padding-left: 4px;
}
.deck:nth-child(2) { border-top: 1px solid #a8a8a8; height: 23px; }
.deck svg { width: 10px; height: 12px; }
.deck-open { font-weight: bold; }
.deck-last { height: 21px; padding-bottom: 2px; }

.anim {
  height: 448px; flex: none; display: flex; overflow: hidden;
  border-left: 1px solid #a8a8a8; border-right: 1px solid #a8a8a8;
}
.anim-body { width: 394px; flex: none; padding: 8px 8px 0 8px; overflow: hidden; }
.group-head { height: 16px; display: flex; align-items: center; gap: 5px; color: #8c8c8c; margin-top: 15px; }
.group-head::after { content: ""; flex: 1; height: 1px; background: #aaa; }
.group-head.strong { color: #111; font-weight: bold; margin-top: 0; }
.btn-row { display: flex; gap: 10px; margin: 9px 0 0 1px; }
.btn {
  height: 30px; display: flex; align-items: center; justify-content: center; flex: none;
  border: 1px solid #b4b4b4; border-radius: 3px; padding-bottom: 2px;
  background: #f3f3f3; color: #a0a0a0;
}
.btn-add { width: 101px; }
.btn-del { width: 87px; }
.btn-dots { width: 38px; margin-left: 9px; color: #7c96c4; text-decoration: underline; }
.field { display: flex; height: 26px; margin-top: 8px; align-items: flex-start; }
.field.first { margin-top: 9px; }
.field label { width: 89px; line-height: 28px; color: #9a9a9a; flex: none; }
.fcombo { width: 241px; height: 26px; background: #fff; border: 1px solid #888c94; position: relative; flex: none; }
.fcombo.light { border-color: #b0b0b0; }
.fdrop { position: absolute; right: 0; top: 0; bottom: 0; width: 17px; background: #f4f4f4; border-left: 1px solid #aaa; }
.fdrop::after { content: ""; position: absolute; left: 4px; top: 10px; border: 4px solid transparent; border-top-color: #999; border-bottom: 0; }
.field .btn { margin-top: 1px; }
.effects {
  list-style: none; margin: 19px 0 0 0; padding: 0; height: 216px;
  background: #fff; border: 1px solid #888c94;
}
.effects li { height: 19px; display: flex; align-items: center; padding: 0 0 5px 22px; color: #111; white-space: nowrap; letter-spacing: .2px; }
.effects li .e1 { width: 12px; height: 13px; margin-top: -1px; flex: none; }
.effects li .e2 { width: 8px; height: 12px; margin: 3px 0 0 -4px; flex: none; }
.effects li .e3 { width: 15px; height: 11px; margin: 3px 3px 0 3px; flex: none; }
.move-row { display: flex; justify-content: flex-end; gap: 10px; margin-top: 8px; padding-right: 1px; }
.btn-move { width: 38px; align-items: flex-start; padding-top: 2px; }
.mv-up { border: 4px solid transparent; border-bottom-color: #aaa; border-top: 0; }
.mv-down { width: 7px; height: 5px; background: #aaa; }
.vs-panel { width: 16px; }
.vs-panel .thumb { top: 18px; height: 318px; }

/* status */
.toolrow-draw {
  height: 32px;
  background: linear-gradient(#fff 0, #f2f4fa 5px, #d3d9ec 10px, #d3d9ec 60%, #dfe5f6 100%);
  border-bottom: 1px solid #bcbfc6;
}
.tb-draw { width: 812px; border-right: 1px solid #c4c8d4; padding-top: 2px; }
.s-select {
  width: 25px; height: 26px; flex: none; display: flex; align-items: center; justify-content: center;
  border: 1px solid #555c68; border-radius: 3px; background: #d8dcec;
}
.s-select svg { width: 20px; height: 20px; }
.tb-draw .grip { margin-right: 5px; }
.statusbar { height: 24px; flex: none; display: flex; background: #f0f0f0; border-bottom: 1px solid #4c5660; }
.st { height: 100%; display: flex; align-items: center; border-right: 1px solid #b0b0b0; margin: 0; white-space: nowrap; flex: none; color: #1c1c24; }
.st svg { width: 15px; height: 14px; flex: none; }
.st-blank { width: 514px; }
.st-pos { width: 221px; padding-left: 7px; gap: 5px; letter-spacing: -.25px; }
.st-pos .st-size { margin-left: 6px; }
.st-mod { width: 28px; padding-left: 1px; }
.st-mod svg { width: 18px; height: 18px; }
.st-empty { width: 30px; }
.st-page { width: 81px; padding-left: 6px; }
.st-style { width: 213px; padding-left: 6px; }
.st-zoom { width: 144px; padding-left: 2px; gap: 3px; }
.st-zoom .z-btn { width: 12px; height: 12px; margin-left: 3px; }
.z-track { width: 98px; height: 1px; background: #777; position: relative; margin: 0 0 0 2px; }
.z-tick { position: absolute; left: 48px; top: -4px; width: 1px; height: 9px; background: #777; }
.z-knob { position: absolute; left: 27px; top: -4px; width: 8px; height: 8px; border-radius: 50%; background: #5a82a8; border: 1px solid #34506c; }
.st-pct { border-right: none; padding-left: 9px; }

/* taskbar */
.taskbar {
  flex: 1; position: relative; display: flex; overflow: hidden;
  background: linear-gradient(#8ba2b6, #a8c4dc);
}
.orb { width: 28px; height: 28px; border-radius: 50%; margin: 1px 0 0 13px; border: 1px solid #dfe8f0; background: #6c93b6; flex: none; }
.task-btns { display: flex; gap: 3px; margin-left: 19px; flex: none; }
.task { width: 59px; height: 20px; margin-top: 1px; border-radius: 2px; background: #d4e4f2; display: flex; justify-content: center; border: 1px solid #7e98ae; }
.task i { width: 16px; height: 16px; margin-top: 2px; border-radius: 50%; }
.t-red { background: #dc4a36; }
.t-brown { background: #fff; border: 2px solid #a8431c; border-radius: 0 !important; }
.t-tick { width: 3px !important; background: #d2685c; }
.t-tan { background: #c4b48c; border-radius: 0 !important; }
.t-grey { background: #b0b4b8; }
.tray { display: flex; gap: 2px; margin-left: 478px; flex: none; }
.tray span { width: 18px; height: 6px; margin-top: 1px; background: #7b8ea0; border: 1px solid #5c6c7c; }
.clock { width: 22px; height: 3px; margin: 2px 0 0 142px; background: #f4f8fc; flex: none; }
```
